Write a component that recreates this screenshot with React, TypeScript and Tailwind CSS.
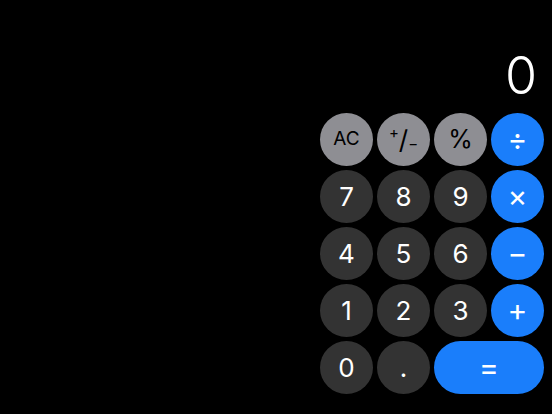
type Key = {
  label: React.ReactNode;
  kind: 'fn' | 'num' | 'op';
  wide?: boolean;
  size?: string;
};

const keys: Key[] = [
  { label: 'AC', kind: 'fn' },
  {
    label: (
      <span className="flex items-start">
        <span className="text-[15px] leading-none -mt-[2px]">+</span>
        <span className="text-[26px] leading-none">/</span>
        <span className="text-[15px] leading-none mt-[9px]">−</span>
      </span>
    ),
    kind: 'fn',
  },
  { label: '%', kind: 'fn', size: 'text-[25px]' },
  { label: '÷', kind: 'op' },
  { label: '7', kind: 'num' },
  { label: '8', kind: 'num' },
  { label: '9', kind: 'num' },
  { label: '×', kind: 'op' },
  { label: '4', kind: 'num' },
  { label: '5', kind: 'num' },
  { label: '6', kind: 'num' },
  { label: '−', kind: 'op' },
  { label: '1', kind: 'num' },
  { label: '2', kind: 'num' },
  { label: '3', kind: 'num' },
  { label: '+', kind: 'op' },
  { label: '0', kind: 'num' },
  { label: '.', kind: 'num' },
  { label: '=', kind: 'op', wide: true },
];

const kindStyles = {
  fn: 'bg-[#8e8e93] text-black text-[19px]',
  num: 'bg-[#333333] text-white text-[26px]',
  op: 'bg-[#1a7efb] text-white text-[30px]',
};

function CalcKey({ k }: { k: Key }) {
  return (
    <button
      className={`h-[53px] rounded-full flex items-center justify-center ${
        k.wide ? 'col-span-2' : ''
      } ${kindStyles[k.kind]} ${k.size ?? ''}`}
    >
      {k.label}
    </button>
  );
}

export default function App() {
  return (
    <div
      className="w-screen h-screen bg-black flex flex-col items-end justify-end pr-[8px] pb-[20px]"
      style={{ fontFamily: 'Inter, "Liberation Sans", sans-serif' }}
    >
      <div className="w-[224px] text-right text-white text-[52px] leading-none font-light pr-[7px] mb-[11px]">
        0
      </div>
      <div className="grid grid-cols-[repeat(4,53px)] gap-x-[4px] gap-y-[4px]">
        {keys.map((k, i) => (
          <CalcKey key={i} k={k} />
        ))}
      </div>
    </div>
  );
}
